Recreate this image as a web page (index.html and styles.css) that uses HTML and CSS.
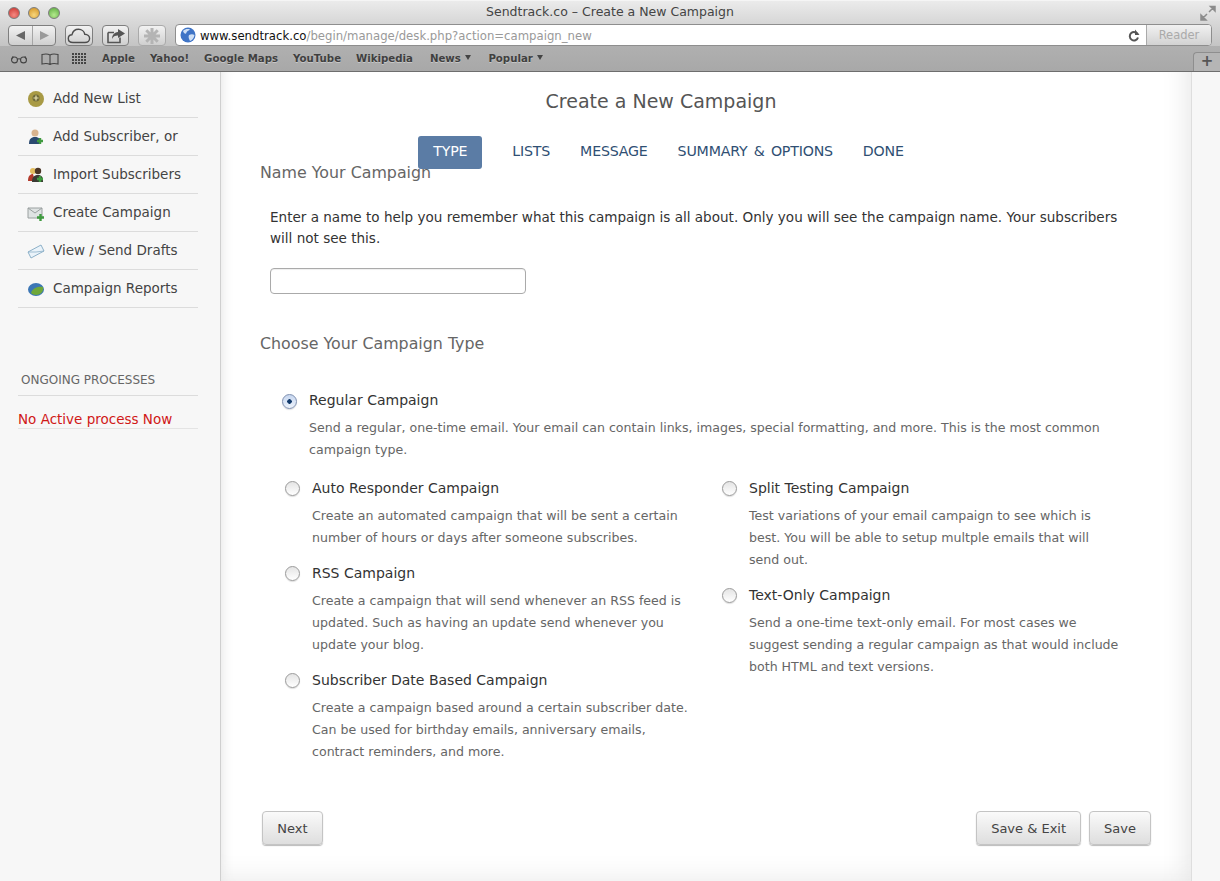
FILE: index.html
```html
<!DOCTYPE html>
<html lang="en">
<head>
<meta charset="utf-8">
<title>Sendtrack.co – Create a New Campaign</title>
<link rel="stylesheet" href="styles.css">
</head>
<body>
<div class="window">
  <header class="chrome">
    <div class="titlebar">
      <div class="lights"><span class="light red"></span><span class="light yellow"></span><span class="light green"></span></div>
      <div class="wintitle">Sendtrack.co – Create a New Campaign</div>
      <svg class="expand" width="16" height="16" viewBox="0 0 16 16"><path d="M9 7l5-5M10.500 1.500h4.500v4.500z" stroke="#8c8c8c" stroke-width="1.500" fill="#8c8c8c"/><path d="M7 9l-5 5M1 10v5h5z" stroke="#8c8c8c" stroke-width="1.500" fill="#8c8c8c"/></svg>
    </div>
    <div class="toolbar">
      <div class="tbtn navbtn">
        <span class="navhalf"><svg width="11" height="11" viewBox="0 0 11 11"><path d="M10 1v9L1 5.500z" fill="#666"/></svg></span>
        <span class="navhalf"><svg width="11" height="11" viewBox="0 0 11 11"><path d="M1 1v9l9-4.500z" fill="#9a9a9a"/></svg></span>
      </div>
      <div class="tbtn cloudbtn"><svg width="24" height="16" viewBox="0 0 24 16"><path d="M6 14.500c-3 0-4.700-1.800-4.700-4 0-2.100 1.600-3.700 3.700-3.800C5.800 3.300 8.500 1.300 11.500 1.300c3.200 0 5.800 2.200 6.300 5 2.700.1 4.800 1.900 4.800 4.200 0 2.300-2 4-4.600 4z" fill="none" stroke="#4d4d4d" stroke-width="1.400"/></svg></div>
      <div class="tbtn sharebtn"><svg width="20" height="16" viewBox="0 0 20 16"><path d="M2 4.500h6M2 4.500v10h12v-5" fill="none" stroke="#555" stroke-width="1.600"/><path d="M12 1l7 4.500-7 4.500V7.500c-3 0-5 1-6 3.500 0-4 2-6.500 6-7z" fill="#555"/></svg></div>
      <div class="tbtn extbtn"><svg width="18" height="18" viewBox="0 0 18 18"><path d="M9 1v16M1 9h16M3.300 3.300l11.400 11.400M14.700 3.300L3.300 14.700" stroke="#b4b4b4" stroke-width="3"/></svg></div>
      <div class="address">
        <svg class="globe" width="16" height="16" viewBox="0 0 16 16"><circle cx="8" cy="8" r="7.500" fill="#3f74c6"/><path d="M3 4c2-2 5-2.500 7-1.500-1 1.500-3 1-3.500 3S4 7 3 4zM9 8c2-1 4-1 5.500 0-.5 3-2.500 5.500-4.500 6-1-2-2-4-1-6z" fill="#cfe0f5"/></svg>
        <span class="url"><span class="urlhost">www.sendtrack.co</span><span class="urlpath">/begin/manage/desk.php?action=campaign_new</span></span>
        <svg class="reload" width="12" height="13" viewBox="0 0 12 13"><path d="M9.800 5.500A4.200 4.200 0 1 0 10 8.500" fill="none" stroke="#555" stroke-width="2"/><path d="M7 0.500v5.500h4.500z" fill="#555"/></svg>
        <span class="reader">Reader</span>
      </div>
    </div>
    <div class="bookmarks">
      <svg class="bmicon" width="18" height="10" viewBox="0 0 20 10"><circle cx="5" cy="6" r="3.300" fill="none" stroke="#444" stroke-width="1.200"/><circle cx="15" cy="6" r="3.300" fill="none" stroke="#444" stroke-width="1.200"/><path d="M8 5.500c1.300-1 2.700-1 4 0M2 5l1.500-3M18 5l-1.500-3" fill="none" stroke="#444" stroke-width="1.200"/></svg>
      <svg class="bmicon" width="18" height="12" viewBox="0 0 18 12"><path d="M9 2C7 .8 4 .8 1 1.500v9.500c3-.7 6-.7 8 .5 2-1.200 5-1.200 8-.5V1.500C14 .8 11 .8 9 2zm0 0v9.500" fill="none" stroke="#444" stroke-width="1.100"/></svg>
      <svg class="bmicon grid" width="15" height="12" viewBox="0 0 15 12"><path d="M0 1h15M0 4h15M0 7h15M0 10h15" stroke="#444" stroke-width="2" stroke-dasharray="2 1"/></svg>
      <span class="bm">Apple</span>
      <span class="bm">Yahoo!</span>
      <span class="bm">Google Maps</span>
      <span class="bm">YouTube</span>
      <span class="bm">Wikipedia</span>
      <span class="bm bm-menu">News <i class="caret"></i></span>
      <span class="bm bm-menu">Popular <i class="caret"></i></span>
      <span class="newtab">+</span>
    </div>
  </header>
  <div class="page">
    <aside class="sidebar">
      <ul class="menu">
        <li class="menuitem"><svg class="micon" width="18" height="18" viewBox="0 0 18 18"><circle cx="9" cy="9" r="8" fill="#a89a45"/><circle cx="9" cy="8" r="3.500" fill="#6f6a3a"/><path d="M9 5.500v5M6.500 8h5" stroke="#e8e2b0" stroke-width="1.200"/></svg>Add New List</li>
        <li class="menuitem"><svg class="micon" width="18" height="18" viewBox="0 0 18 18"><circle cx="8" cy="5" r="3.500" fill="#d9b48f"/><path d="M2 16c0-5 2-7 6-7s6 2 6 7z" fill="#2b4a70"/><path d="M13 10v6M10 13h6" stroke="#3f9a3f" stroke-width="2.400"/></svg>Add Subscriber, or</li>
        <li class="menuitem"><svg class="micon" width="18" height="18" viewBox="0 0 18 18"><circle cx="6" cy="5" r="3" fill="#e3bd5f"/><circle cx="11" cy="5" r="3.200" fill="#4a3525"/><path d="M1 15c0-5 2-7 5-7l2 7z" fill="#b33a2b"/><path d="M5 16c0-5 2-7 6-7s5 2 5 7z" fill="#3a3a34"/><path d="M13 10v6M10 13h6" stroke="#3f9a3f" stroke-width="2.400"/></svg>Import Subscribers</li>
        <li class="menuitem"><svg class="micon" width="18" height="18" viewBox="0 0 18 18"><path d="M1 4h14v10H1z" fill="#dfe3e3" stroke="#9aa0a0"/><path d="M1 4l7 5 7-5" fill="none" stroke="#9aa0a0"/><path d="M13.500 10v7M10 13.500h7" stroke="#3f9a3f" stroke-width="2.400"/></svg>Create Campaign</li>
        <li class="menuitem"><svg class="micon" width="18" height="18" viewBox="0 0 18 18"><path d="M1 10L14 3l3 6-13 7z" fill="#eaf3fa" stroke="#8db0c8"/><path d="M1 10l8 0 8-1" fill="none" stroke="#8db0c8" stroke-width=".8"/></svg>View / Send Drafts</li>
        <li class="menuitem"><svg class="micon" width="18" height="18" viewBox="0 0 18 18"><ellipse cx="9" cy="9.500" rx="8" ry="6.500" fill="#3b76b5"/><path d="M4 13c1-4 6-7 12-6 1 4-2 8-7 8-2 0-4-1-5-2z" fill="#6fa83a"/></svg>Campaign Reports</li>
      </ul>
      <h4 class="sidehead">ONGOING PROCESSES</h4>
      <p class="noproc">No Active process Now</p>
    </aside>
    <main class="main">
      <div class="head">
        <h1 class="title">Create a New Campaign</h1>
        <nav class="tabs">
          <span class="tab active">TYPE</span>
          <span class="tab">LISTS</span>
          <span class="tab">MESSAGE</span>
          <span class="tab">SUMMARY &amp; OPTIONS</span>
          <span class="tab">DONE</span>
        </nav>
      </div>
      <h2 class="section first">Name Your Campaign</h2>
      <p class="lead">Enter a name to help you remember what this campaign is all about. Only you will see the campaign name. Your subscribers will not see this.</p>
      <input class="nameinput" type="text" aria-label="Campaign name">
      <h2 class="section second">Choose Your Campaign Type</h2>
      <div class="option regular">
        <span class="radio checked"></span>
        <div class="optbody">
          <div class="optname">Regular Campaign</div>
          <p class="optdesc">Send a regular, one-time email. Your email can contain links, images, special formatting, and more. This is the most common campaign type.</p>
        </div>
      </div>
      <div class="types">
        <div class="typecol">
          <div class="option"><span class="radio"></span><div class="optbody"><div class="optname">Auto Responder Campaign</div><p class="optdesc">Create an automated campaign that will be sent a certain number of hours or days after someone subscribes.</p></div></div>
          <div class="option"><span class="radio"></span><div class="optbody"><div class="optname">RSS Campaign</div><p class="optdesc">Create a campaign that will send whenever an RSS feed is updated. Such as having an update send whenever you update your blog.</p></div></div>
          <div class="option"><span class="radio"></span><div class="optbody"><div class="optname">Subscriber Date Based Campaign</div><p class="optdesc">Create a campaign based around a certain subscriber date. Can be used for birthday emails, anniversary emails, contract reminders, and more.</p></div></div>
        </div>
        <div class="typecol">
          <div class="option"><span class="radio"></span><div class="optbody"><div class="optname">Split Testing Campaign</div><p class="optdesc">Test variations of your email campaign to see which is best. You will be able to setup multple emails that will send out.</p></div></div>
          <div class="option"><span class="radio"></span><div class="optbody"><div class="optname">Text-Only Campaign</div><p class="optdesc">Send a one-time text-only email. For most cases we suggest sending a regular campaign as that would include both HTML and text versions.</p></div></div>
        </div>
      </div>
      <div class="actions">
        <button class="btn" type="button">Next</button>
        <div class="actright">
          <button class="btn" type="button">Save &amp; Exit</button>
          <button class="btn" type="button">Save</button>
        </div>
      </div>
    </main>
    <div class="rightstrip"></div>
  </div>
</div>
</body>
</html>
```
FILE: styles.css
```css
* { box-sizing: border-box; }
html, body { margin: 0; padding: 0; height: 100%; }
body { font-family: "DejaVu Sans", "Liberation Sans", sans-serif; font-size: 13.5px; color: #333; overflow: hidden; background: #f7f7f7; }
.window { width: 1220px; height: 881px; display: flex; flex-direction: column; overflow: hidden; }

.chrome { height: 72px; flex: none; background: linear-gradient(#ececec 0, #d8d8d8 22px, #c4c4c4 46px, #b0b0b0 46px, #a8a8a8 71px); border-bottom: 1px solid #6e6e6e; }
.titlebar { height: 24px; display: flex; align-items: center; position: relative; padding: 0 4px 0 8px; border-top: 1px solid #f5f5f5; }
.lights { display: flex; gap: 8px; }
.light { width: 12px; height: 12px; border-radius: 50%; border: 1px solid #7d7d7d; }
.red { background: radial-gradient(circle at 50% 70%, #f58a82, #c9302c); }
.yellow { background: radial-gradient(circle at 50% 70%, #f7d67c, #d18f1e); }
.green { background: radial-gradient(circle at 50% 70%, #b5ea8e, #57a83c); }
.wintitle { position: absolute; left: 0; right: 0; top: 3px; text-align: center; font-size: 12.5px; color: #444; }
.expand { margin-left: auto; }

.toolbar { height: 22px; display: flex; align-items: flex-end; padding: 0 8px; gap: 9px; }
.tbtn { height: 21px; border: 1px solid #7f7f7f; border-radius: 4px; background: linear-gradient(#f2f2f2, #cfcfcf); display: flex; align-items: center; justify-content: center; }
.navbtn { width: 48px; }
.navhalf { width: 50%; height: 100%; display: flex; align-items: center; justify-content: center; }
.navhalf + .navhalf { border-left: 1px solid #a5a5a5; }
.cloudbtn { width: 28px; }
.sharebtn { width: 27px; }
.extbtn { width: 28px; border-color: #aaa; }
.address { flex: 1; height: 22px; display: flex; align-items: center; background: #fff; border: 1px solid #8e8e8e; border-radius: 4px; padding-left: 4px; }
.globe { flex: none; }
.url { margin-left: 4px; font-size: 11.7px; padding-top: 1px; }
.urlhost { color: #111; }
.urlpath { color: #999; }
.reload { margin-left: auto; margin-right: 6px; }
.reader { width: 65px; height: 20px; background: linear-gradient(#f1f1f1, #d2d2d2); border-left: 1px solid #aaa; border-radius: 0 3px 3px 0; color: #aaa; font-size: 11.5px; display: flex; align-items: center; justify-content: center; }

.bookmarks { height: 25px; display: flex; align-items: center; padding: 0 0 0 10px; position: relative; }
.bmicon { flex: none; margin-right: 13px; }
.grid { margin-right: 0; }
.bm { font-weight: 600; color: #3f3f3f; margin-left: 15px; text-shadow: 0 1px 0 rgba(255,255,255,.35); font-size: 10.2px; white-space: nowrap; }
.bm-menu { margin-left: 17px; }
.caret { display: inline-block; width: 0; height: 0; border: 3.500px solid transparent; border-top: 5px solid #444; border-bottom: 0; margin-left: 1px; vertical-align: 2px; }
.newtab { position: absolute; right: 0; bottom: 0; width: 27px; height: 19px; background: #b5b5b5; border: 1px solid #8e8e8e; border-right: 0; border-bottom: 0; border-radius: 4px 0 0 0; text-align: center; font-size: 15px; line-height: 17px; font-weight: 700; color: #555; }

.page { flex: 1; display: flex; min-height: 0; }
.sidebar { width: 220px; flex: none; padding: 8px 22px 0 18px; }
.menu { list-style: none; margin: 0; padding: 0; }
.menuitem { height: 38px; display: flex; align-items: center; padding: 0 0 2px 9px; border-bottom: 1px solid #dcdcdc; color: #444; font-size: 13.5px; }
.micon { flex: none; margin-right: 8px; margin-top: 3px; }
.sidehead { margin: 65px 0 0; padding: 0 0 8px 3px; font-weight: 400; font-size: 12px; color: #666; border-bottom: 1px solid #dcdcdc; }
.noproc { margin: 0; padding: 15px 0 0; font-size: 13.5px; line-height: 17px; color: #d01818; border-bottom: 1px solid #e4e4e4; }

.main { width: 972px; flex: none; background: #fff; border-left: 1px solid #cfcfcf; border-right: 1px solid #dedede; box-shadow: inset 0 -30px 30px -30px #e8e8e8, inset 12px 0 14px -12px #e0e0e0, inset -30px 0 30px -30px #e0e0e0; padding: 0 39px; }
.head { padding-right: 90px; margin-left: -39px; margin-right: -39px; position: relative; z-index: 1; height: 97px; }
.title { margin: 0; padding-top: 17px; height: 64px; text-align: center; font-size: 19px; font-weight: 400; color: #555; line-height: 25px; }
.tabs { display: flex; justify-content: center; height: 33px; gap: 30px; }
.tab { height: 33px; line-height: 31px; font-size: 14.2px; color: #2f4f73; letter-spacing: -.2px; word-spacing: 2px; }
.active { padding: 0 15px; background: #5b7ca5; color: #fff; border-radius: 3px; }
.section { margin: 0; font-size: 15.85px; font-weight: 400; color: #666; line-height: 20px; }
.first { margin-top: -6px; }
.lead { margin: 24px 0 0 10px; line-height: 21px; color: #333; width: 860px; font-size: 13.55px; }
.nameinput { display: block; margin: 19px 0 0 10px; width: 256px; height: 26px; border: 1px solid #aaa; border-radius: 4px; background: #fff; box-shadow: inset 0 1px 1px #eee; }
.second { margin-top: 40px; }

.option { display: flex; align-items: flex-start; }
.regular { margin-top: 36px; padding-left: 22px; }
.radio { flex: none; width: 15px; height: 15px; border-radius: 50%; border: 1px solid #9a9a9a; background: linear-gradient(#e4e4e4, #fff); margin: 3px 12px 0 3px; box-shadow: 0 1px 1px #ddd; }
.regular .radio { margin-left: 0; margin-top: 4px; }
.checked { background: radial-gradient(circle, #123a6b 0 2px, transparent 2.500px), linear-gradient(#c6d6ef, #eef3fb); border-color: #7e8fb0; }
.optname { font-size: 14px; line-height: 20px; color: #333; }
.optdesc { margin: 7px 0 0; font-size: 12.6px; line-height: 22px; color: #666; }
.regular .optbody { width: 810px; }
.types { display: flex; margin-top: 17px; padding-left: 22px; }
.typecol { width: 437px; flex: none; display: flex; flex-direction: column; gap: 14px; }
.typecol .optbody { width: 372px; }
.typecol:first-child .optbody { width: 378px; }

.actions { display: flex; justify-content: space-between; margin: 48px 1px 0 2px; }
.actright { display: flex; gap: 8px; }
.btn { height: 34px; min-width: 61px; padding: 0 14px; border: 1px solid #c4c4c4; border-radius: 4px; background: linear-gradient(#fafafa, #dedede); box-shadow: 0 1px 1px #bbb; font-family: inherit; font-size: 13px; color: #444; }
.rightstrip { flex: 1; background: #f7f7f7; }
```
